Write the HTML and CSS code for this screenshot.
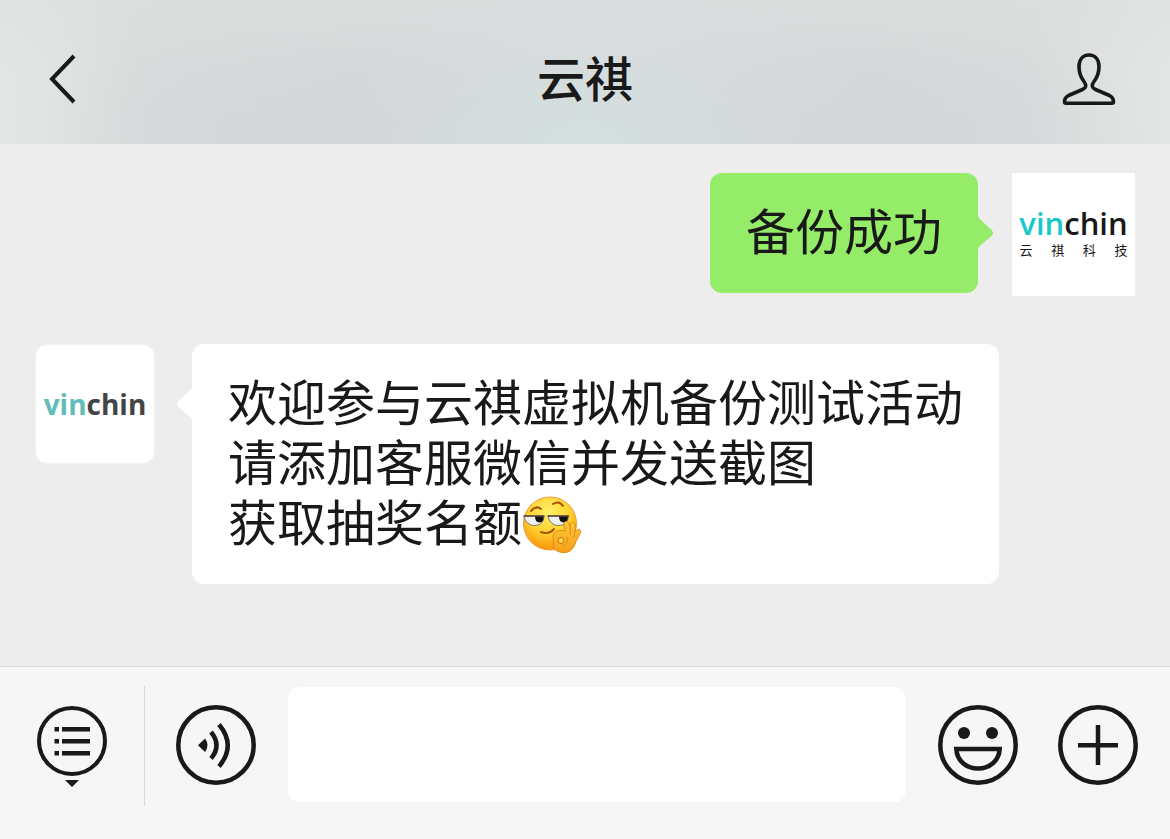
FILE: index.html
```
<!DOCTYPE html>
<html lang="zh-CN">
<head>
    <meta charset="UTF-8">
    <meta name="viewport" content="width=device-width, initial-scale=1">
    <title>云祺</title>
    <link rel="stylesheet" href="styles.css">
</head>
<body>
    <header class="header">
        <button class="icon-btn" type="button" aria-label="返回">
            <svg width="28" height="50" viewBox="0 0 28 50" fill="none" stroke="#181a19" stroke-width="4">
                <path d="M26 2 L4 25 L26 48"/>
            </svg>
        </button>
        <h1>云祺</h1>
        <button class="icon-btn btn-profile" type="button" aria-label="资料">
            <svg width="54" height="54" viewBox="0 0 54 54" fill="none" stroke="#181a19" stroke-width="3.6" stroke-linejoin="round">
                <path d="M27 3C20.500 3 17 8 17 14.500C17 21.500 18.500 25 22 29.500C25 33.500 24 36 20.500 37.500L6.500 43.500C3.500 45 2.500 47 2.500 49.500C2.500 51 3 51.300 4 51.300H50C51 51.300 51.500 51 51.500 49.500C51.500 47 50.500 45 47.500 43.500L33.500 37.500C30 36 29 33.500 32 29.500C35.500 25 37 21.500 37 14.500C37 8 33.500 3 27 3Z"/>
            </svg>
        </button>
    </header>

    <main class="chat">
        <div class="message sent">
            <div class="bubble">备份成功</div>
            <svg class="tail" width="16" height="34" viewBox="0 0 16 34">
                <path d="M0 0Q1 3 4 5L13.500 14Q16.500 17 13.500 20L4 28Q1 30 0 34Z"/>
            </svg>
            <div class="avatar avatar-me">
                <span class="logo"><span class="logo-accent">vin</span>chin</span>
                <span class="logo-sub"><span>云</span><span>祺</span><span>科</span><span>技</span></span>
            </div>
        </div>

        <div class="message received">
            <div class="avatar avatar-brand">
                <span class="logo"><span class="logo-accent">vin</span>chin</span>
            </div>
            <svg class="tail" width="16" height="34" viewBox="0 0 16 34">
                <path d="M16 0Q15 3 12 5L2.500 14Q-0.500 17 2.500 20L12 28Q15 30 16 34Z"/>
            </svg>
            <div class="bubble">
                欢迎参与云祺虚拟机备份测试活动<br>
                请添加客服微信并发送截图<br>
                获取抽奖名额<svg class="emoji" width="60" height="60" viewBox="0 0 60 60" role="img" aria-label="表情">
                    <defs>
                        <radialGradient id="face" cx="48%" cy="28%" r="72%">
                            <stop offset="0" stop-color="#fff16a"/>
                            <stop offset="0.550" stop-color="#ffd22e"/>
                            <stop offset="1" stop-color="#f9940e"/>
                        </radialGradient>
                        <linearGradient id="hand" x1="0" y1="0" x2="0" y2="1">
                            <stop offset="0" stop-color="#ffc737"/>
                            <stop offset="1" stop-color="#f6a11c"/>
                        </linearGradient>
                    </defs>
                    <circle cx="28" cy="29.500" r="26.500" fill="url(#face)" stroke="#ef9a3c"/>
                    <path d="M9 17Q14 11 19 15M31 10Q37 6 41 12" fill="none" stroke="#a6540b" stroke-width="2" stroke-linecap="round"/>
                    <path d="M2 22H22C22 28 18 31.500 13 31.500C7 31.500 3 28 2 22Z" fill="#eef0f2" stroke="#81766a"/>
                    <path d="M26 22H46.500C46 28 42 31.500 37 31.500C31 31.500 27 28 26 22Z" fill="#eef0f2" stroke="#81766a"/>
                    <path d="M13 22H21.500Q22 28.500 17.500 28.500Q13 28.500 13 22ZM37 22H46Q46 28.500 41.500 28.500Q37 28.500 37 22Z" fill="#111"/>
                    <path d="M1.500 22H22.500M25.500 22H47" stroke="#55483a" stroke-width="1.500"/>
                    <path d="M19 38Q27 41 32 35" fill="none" stroke="#a6540b" stroke-width="2" stroke-linecap="round"/>
                    <path d="M31 43C31 38 35 36 39 36.500L43 37L42 31Q42 27 45 27.500Q47 28 48 32Q49 27 52 28.500Q54 30 53 37L55 36Q59 34 58.500 38C57 43 54 46 53 50C51 56 47 58.500 42 58.500C36 58.500 32 56 31.500 52Z" fill="url(#hand)" stroke="#e08a14"/>
                    <path d="M48 32L48.500 41M53 37L52 43M45 43Q47 50 41 52" fill="none" stroke="#e08a14"/>
                    <circle cx="39" cy="46.500" r="3" fill="#ffd44a" stroke="#c96f08"/>
                </svg>
            </div>
        </div>
    </main>

    <footer class="toolbar">
        <div class="menu-cell">
            <button class="icon-btn" type="button" aria-label="菜单">
                <svg width="70" height="82" viewBox="0 0 70 82">
                    <circle cx="35" cy="35" r="33" fill="none" stroke="#191919" stroke-width="4"/>
                    <path d="M17.500 21h4.500v4.500h-4.500zM25 21h28v4.500h-28zM17.500 33h4.500v4.500h-4.500zM25 33h28v4.500h-28zM17.500 45h4.500v4.500h-4.500zM25 45h28v4.500h-28zM28 74h14l-7 7z" fill="#191919"/>
                </svg>
            </button>
        </div>
        <button class="icon-btn" type="button" aria-label="语音">
            <svg width="80" height="80" viewBox="0 0 80 80" fill="none" stroke="#191919" stroke-width="4.500">
                <circle cx="40" cy="40" r="37.700"/>
                <path d="M22 40.200L29 33.500Q34 40 29 47Z" fill="#191919" stroke="none"/>
                <path d="M35 27Q46 40.500 35 53.500M43 19.500Q60.500 40.500 43 61.500"/>
            </svg>
        </button>
        <input class="text-input" type="text" aria-label="输入消息">
        <button class="icon-btn" type="button" aria-label="表情">
            <svg width="80" height="80" viewBox="0 0 80 80" fill="none" stroke="#191919" stroke-width="4.500">
                <circle cx="40" cy="40" r="37.700"/>
                <circle cx="26" cy="28" r="6" fill="#191919" stroke="none"/>
                <circle cx="54" cy="28" r="6" fill="#191919" stroke="none"/>
                <path d="M18.300 44H61.700C61 56 51.500 63.500 40 63.500C28.500 63.500 19 56 18.300 44Z"/>
            </svg>
        </button>
        <button class="icon-btn btn-more" type="button" aria-label="更多">
            <svg width="80" height="80" viewBox="0 0 80 80" fill="none" stroke="#191919" stroke-width="4.500">
                <circle cx="40" cy="40" r="37.700"/>
                <path d="M20 40.300H60M40 20V60"/>
            </svg>
        </button>
    </footer>
</body>
</html>
```
FILE: styles.css
```
* {
    box-sizing: border-box;
}
body {
    margin: 0;
    min-height: 100vh;
    display: flex;
    flex-direction: column;
    background-color: #ededed;
    color: #191919;
    font-family: "Noto Sans CJK SC", sans-serif;
}
svg {
    display: block;
}
.icon-btn {
    flex: none;
    padding: 0;
    border: none;
    background: none;
    cursor: pointer;
}

/* 顶部导航 */
.header {
    display: grid;
    grid-template-columns: 1fr auto 1fr;
    align-items: center;
    justify-items: start;
    height: 144px;
    padding: 14px 48px 0;
    background:
        radial-gradient(ellipse 200px 90px at 50% 100%, rgba(210, 224, 222, 0.7), rgba(210, 224, 222, 0)),
        radial-gradient(ellipse 260px 120px at 24% 100%, rgba(208, 212, 215, 0.5), rgba(208, 212, 215, 0)),
        radial-gradient(ellipse 260px 120px at 78% 100%, rgba(208, 212, 215, 0.5), rgba(208, 212, 215, 0)),
        linear-gradient(to bottom, rgba(222, 223, 223, 0.6), rgba(222, 223, 223, 0) 50%),
        linear-gradient(to right, #e4e6e6 0, #e2e4e4 4%, #d9dbdc 12%, #d6d9da 30%, #d6dcdd 50%, #d6d9da 75%, #d9dbdc 88%, #e2e4e4 97%, #e4e6e6 100%);
}
.header h1 {
    margin: 0 0 6px;
    font-size: 48px;
    line-height: 60px;
    font-weight: 500;
}
.btn-profile {
    justify-self: end;
    margin-right: 6px;
}

/* 聊天记录 */
.chat {
    flex: 1;
    display: flex;
    flex-direction: column;
    gap: 48px;
    padding: 29px 35px 48px;
}
.message {
    display: flex;
    align-items: flex-start;
}
.sent {
    justify-content: flex-end;
}
.bubble {
    padding: 26px 36px 34px;
    border-radius: 12px;
    background-color: #fff;
    font-size: 49px;
    line-height: 60px;
}
.sent .bubble {
    background-color: #95ec69;
}
.tail {
    flex: none;
    margin-top: 43px;
    fill: #fff;
}
.sent .tail {
    margin-right: 18px;
    fill: #95ec69;
}
.received .tail {
    margin-left: 21px;
}
.emoji {
    display: inline-block;
    vertical-align: middle;
    margin: -12px 0 -4px;
}
.avatar {
    flex: none;
    display: flex;
    flex-direction: column;
    justify-content: center;
    align-items: center;
    background-color: #fff;
}
.avatar-me {
    gap: 4px;
    width: 123px;
    height: 123px;
    padding-bottom: 4px;
}
.avatar-brand {
    width: 120px;
    height: 120px;
    border: 1px solid #f2f2f2;
    border-radius: 12px;
}
.logo {
    font-family: "Open Sans", sans-serif;
    font-size: 31px;
    line-height: 32px;
    font-weight: 600;
}
.logo-accent {
    color: #19c8c8;
}
.avatar-brand .logo {
    font-size: 28px;
    font-weight: 700;
    color: #444;
}
.avatar-brand .logo-accent {
    color: #62bdb8;
}
.logo-sub {
    display: flex;
    justify-content: space-between;
    width: 108px;
    font-family: "Liberation Sans", "Noto Sans CJK SC", sans-serif;
    font-size: 13px;
    line-height: 16px;
}

/* 底部输入栏 */
.toolbar {
    display: flex;
    align-items: flex-start;
    padding: 19px 32px 33px 0;
    border-top: 1px solid #dadada;
    background-color: #f6f6f6;
}
.toolbar > .icon-btn {
    margin: 19px 0 0 32px;
}
.toolbar > .btn-more {
    margin-left: 40px;
}
.menu-cell {
    flex: none;
    display: flex;
    justify-content: center;
    align-items: center;
    width: 145px;
    height: 120px;
    padding-top: 2px;
    border-right: 1px solid #dadada;
}
.toolbar > .menu-cell + .icon-btn {
    margin-left: 31px;
}
.text-input {
    flex: 1;
    min-width: 0;
    height: 115px;
    margin: 1px 0 0 32px;
    padding: 0 30px;
    border: none;
    border-radius: 12px;
    background-color: #fff;
    font-family: inherit;
    font-size: 49px;
}
```
